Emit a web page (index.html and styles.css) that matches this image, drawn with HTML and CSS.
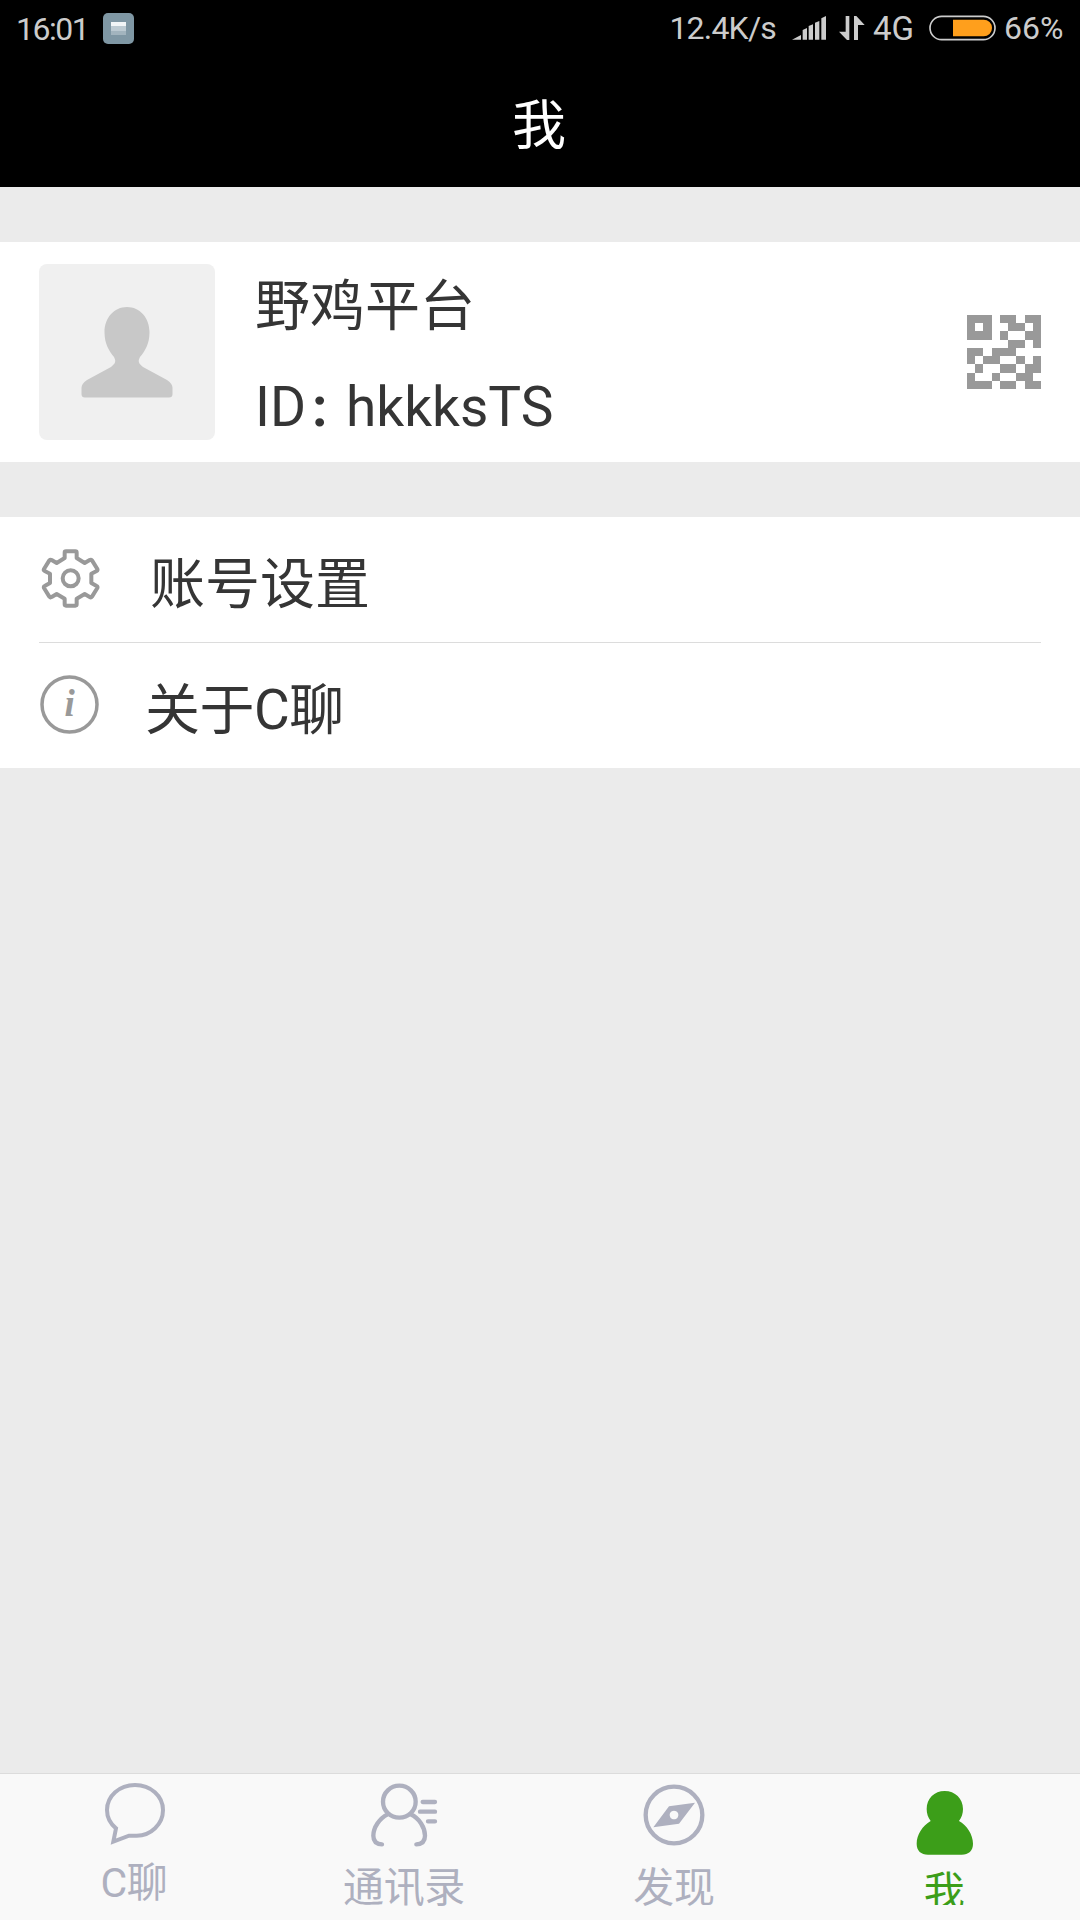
FILE: index.html
```html
<!DOCTYPE html>
<html lang="zh-CN">
<head>
  <meta charset="UTF-8">
  <meta name="viewport" content="width=device-width, initial-scale=1.0">
  <title>我</title>
  <link rel="stylesheet" href="styles.css">
</head>
<body>

<header class="header">
  <div class="status">
    <span class="time">16:01</span>
    <svg class="notice" viewBox="0 0 31 31">
      <rect width="31" height="31" rx="5" fill="#7f97a4"/>
      <rect x="8" y="9" width="15" height="4" fill="#f1f5f7"/>
      <rect x="8" y="13" width="15" height="5" fill="#bccad2"/>
      <rect x="8" y="18" width="15" height="4" fill="#a2b4be"/>
    </svg>
    <span class="speed">12.4K/s</span>
    <svg class="signal" viewBox="426 48 102 72">
      <path d="M426 119L453 105V119ZM458 90l13-6v35h-13zM476 78l13-5v46h-13zM495 68l13-5v56h-13zM514 55l14-7v71h-14z" fill="#ccc"/>
    </svg>
    <svg class="arrows" viewBox="568 46 78 72">
      <path d="M588 46h11v72h-7l-24-25h20zM613 118V46h7l25 27h-20v45z" fill="#ccc"/>
    </svg>
    <span class="network">4G</span>
    <svg class="battery" viewBox="837 44 201 76">
      <rect x="840" y="47" width="195" height="70" rx="35" fill="none" stroke="#ccc" stroke-width="5"/>
      <path d="M909 57H1001a25 25 0 0 1 0 50H909z" fill="#ff9f1c"/>
    </svg>
    <span class="percent">66%</span>
  </div>
  <h1 class="title">我</h1>
</header>

<section class="profile">
  <svg class="avatar" viewBox="0 0 176 176">
    <rect width="176" height="176" rx="8" fill="#f0f0f0"/>
    <path d="M88 43C101 43 110.500 54 110.500 68C110.500 80 106 87 101 93C99 97 99 99 104 103L128 116C132 119 133.500 121 133.500 124V130Q133.500 133.500 130 133.500H46Q42.500 133.500 42.500 130V124C42.500 121 44 119 48 116L72 103C77 99 77 97 75 93C70 87 65.500 80 65.500 68C65.500 54 75 43 88 43Z" fill="#c8c8c8"/>
  </svg>
  <div class="info">
    <div class="name">野鸡平台</div>
    <div class="id">ID<span class="colon">:</span>hkkksTS</div>
  </div>
  <svg class="qr" viewBox="0 0 9 9" shape-rendering="crispEdges">
    <path fill="#999" fill-rule="evenodd" d="M0 0h3v3h-3zM1 1v1h1v-1zM4 0h2v1h-2zM7 0h2v1h-2zM5 1h2v1h-2zM8 1h1v1h-1zM4 2h1v1h-1zM7 2h2v1h-2zM5 3h2v1h-2zM8 3h1v1h-1zM0 4h2v1h-2zM3 4h3v1h-3zM0 5h1v1h-1zM2 5h2v1h-2zM6 5h1v1h-1zM8 5h1v1h-1zM1 6h1v1h-1zM4 6h2v1h-2zM7 6h2v1h-2zM0 7h1v1h-1zM3 7h1v1h-1zM6 7h2v1h-2zM0 8h3v1h-3zM4 8h2v1h-2zM7 8h2v1h-2z"/>
  </svg>
</section>

<section class="list">
  <div class="row">
    <svg class="row-icon" viewBox="27 24 192 180">
      <g fill="none" stroke="#999" stroke-width="12" stroke-linejoin="round">
        <path d="M104 54V38Q104 34 108 34H136Q140 34 140 38V54L164 69L179 60Q183 58 186 61L202 87Q204 91 200 93L184 101V129L200 138Q204 140 202 144L186 170Q183 174 179 171L164 162L140 176V193Q140 197 136 197H108Q104 197 104 193V176L80 162L65 171Q61 174 58 170L42 144Q40 140 44 138L60 129V101L44 93Q40 91 42 87L58 61Q61 58 65 60L80 69Z"/>
        <circle cx="122" cy="115" r="24"/>
      </g>
    </svg>
    <span class="settings">账号设置</span>
  </div>
  <div class="row">
    <svg class="row-icon" viewBox="0 0 64 60">
      <circle cx="30.500" cy="30.500" r="27.500" fill="none" stroke="#999" stroke-width="3.500"/>
      <text class="info-mark" x="25.500" y="42">i</text>
    </svg>
    <span class="about">关于C聊</span>
  </div>
</section>

<main class="blank"></main>

<nav class="tabs">
  <a class="tab chat">
    <svg class="tab-icon" viewBox="90 27 270 252">
      <path d="M168 190C151 176 141 158 141 135C141 93 178 60 225 60C272 60 309 93 309 135C309 178 272 212 230 212H207L160 230Z" fill="none" stroke="#aeb0bf" stroke-width="12"/>
    </svg>
    <span class="label">C聊</span>
  </a>
  <a class="tab">
    <svg class="tab-icon" viewBox="120 27 270 252">
      <g fill="none" stroke="#aeb0bf" stroke-width="13" stroke-linecap="round">
        <ellipse cx="238" cy="110" rx="49" ry="48"/>
        <path d="M203 148C178 160 160 188 160 212C160 228 170 237 186 238M272 148C298 160 315 188 315 212C315 228 305 237 289 238"/>
        <path d="M308 111H345M300 140H345M324 169H345"/>
      </g>
    </svg>
    <span class="label">通讯录</span>
  </a>
  <a class="tab">
    <svg class="tab-icon" viewBox="90 27 270 252">
      <circle cx="222" cy="150" r="85" fill="none" stroke="#aeb0bf" stroke-width="13"/>
      <path d="M160 187L207 124L285 113L237 176ZM222 137a13 13 0 1 0 .1 0z" fill="#aeb0bf" fill-rule="evenodd"/>
    </svg>
    <span class="label">发现</span>
  </a>
  <a class="tab me">
    <svg class="tab-icon" viewBox="120 27 270 252">
      <path d="M254 78C285 78 309 101 309 132C309 146 305 158 297 168C320 180 339 209 339 236C339 257 326 269 305 269H204C183 269 170 257 170 236C170 209 188 182 212 168C204 158 200 146 200 132C200 101 223 78 254 78Z" fill="#3c9e19"/>
    </svg>
    <span class="label">我</span>
  </a>
</nav>

</body>
</html>
```
FILE: styles.css
```css
* { box-sizing: border-box; }
body { margin: 0; height: 1920px; display: flex; flex-direction: column; background: #ebebeb; color: #353535; font-family: Roboto, "Noto Sans CJK SC", sans-serif; font-size: 55px; overflow: hidden; }
svg { display: block; flex: none; }

.header { height: 187px; background: #000; color: #fff; }
.status { height: 56px; display: flex; align-items: center; padding: 0 16px; color: #ccc; font-size: 32px; line-height: 56px; white-space: nowrap; }
.notice { width: 31px; height: 31px; margin-left: 16px; }
.time { width: 71px; padding-top: 1px; letter-spacing: -1.5px; }
.speed { margin-left: auto; letter-spacing: -0.8px; }
.signal { width: 34px; height: 24px; margin-left: 16px; }
.arrows { width: 26px; height: 24px; margin-left: 13px; }
.network { width: 43px; margin-left: 8px; padding-top: 1px; font-size: 33px; }
.battery { width: 67px; height: 26px; margin-left: 13px; }
.percent { width: 60px; margin-left: 8px; }
.title { margin: 0; padding-right: 2px; text-align: center; font-size: 54px; font-weight: 400; line-height: 141px; }

.profile { height: 220px; margin-top: 55px; padding: 0 39px; display: flex; align-items: center; background: #fff; }
.avatar { width: 176px; height: 176px; }
.info { margin-left: 40px; padding-top: 7px; flex: 1; }
.name, .id { height: 101px; line-height: 102px; }
.colon { display: inline-block; width: 40px; padding-left: 6px; font-weight: 700; }
.qr { width: 74px; height: 74px; }

.list { margin-top: 55px; padding: 0 39px; background: #fff; }
.row { height: 125px; padding-bottom: 3px; display: flex; align-items: center; }
.row + .row { height: 126px; border-top: 1px solid #dcdcdc; }
.row-icon { width: 64px; height: 60px; }
.settings { margin-left: 47px; padding-top: 2px; }
.about { margin-left: 42px; padding-top: 1px; letter-spacing: -0.5px; }
.info-mark { font: italic bold 37px "Liberation Serif", serif; fill: #999; }

.blank { flex: 1; }

.tabs { height: 147px; display: flex; background: #f9f9f9; border-top: 1px solid #dcdcdc; }
.tab { flex: 1; display: flex; flex-direction: column; align-items: center; color: #aeb0bf; font-size: 41px; line-height: 50px; }
.tab-icon { width: 90px; height: 84px; }
.label { height: 50px; margin-top: 5px; padding-right: 2px; letter-spacing: -0.3px; }
.chat .label { margin-top: 0; }
.me { color: #3c9e19; }
.me .label { height: 38px; margin-top: 9px; overflow: hidden; }
```
